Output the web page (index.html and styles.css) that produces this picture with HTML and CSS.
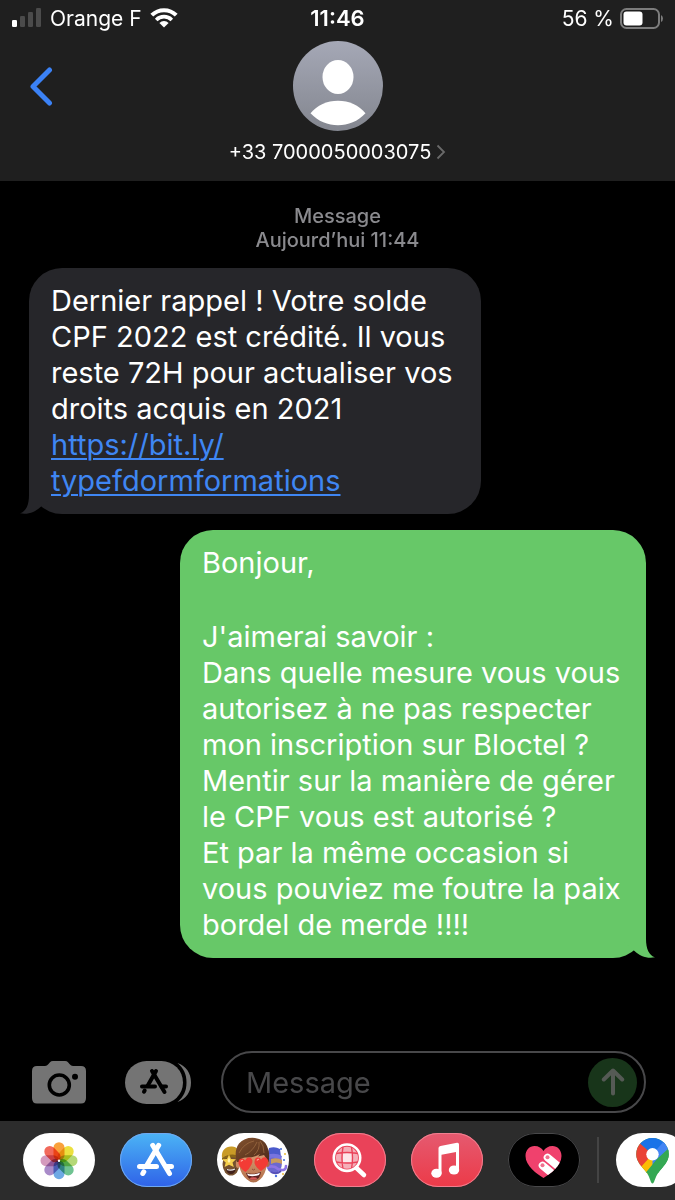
FILE: index.html
```html
<!DOCTYPE html>
<html lang="fr">

<head>
    <meta charset="UTF-8">
    <meta name="viewport" content="width=device-width, initial-scale=1.0">
    <title>Messages</title>
    <link rel="stylesheet" href="styles.css">
</head>

<body>
    <header class="header">
        <!-- Status bar -->
        <div class="status">
            <div class="status-left">
                <svg class="signal" width="30" height="20" viewBox="0 0 30 20">
                    <rect x="0" y="12" width="5" height="7" rx="1.3" fill="#fff" />
                    <rect x="8" y="8" width="5" height="11" rx="1.3" fill="#4b4b4b" />
                    <rect x="16" y="4" width="5" height="15" rx="1.3" fill="#4b4b4b" />
                    <rect x="24" y="0" width="5" height="19" rx="1.3" fill="#4b4b4b" />
                </svg>
                <span>Orange F</span>
                <svg class="wifi" width="28" height="20" viewBox="0 0 28 20" fill="none" stroke="#fff">
                    <path d="M1.8 7.2A17.3 17.3 0 0 1 26.2 7.2" stroke-width="4" />
                    <path d="M6.2 11.9A11 11 0 0 1 21.8 11.9" stroke-width="3.6" />
                    <path d="M14 19.5L9.4 14.9A6.6 6.6 0 0 1 18.6 14.9Z" fill="#fff" stroke="none" />
                </svg>
            </div>
            <time class="clock">11:46</time>
            <div class="status-right">
                <span>56 %</span>
                <svg width="43" height="21" viewBox="0 0 43 21">
                    <rect x="1" y="1" width="38" height="19" rx="5.5" fill="none" stroke="#7c7c7c" stroke-width="2" />
                    <rect x="3.5" y="3.5" width="19" height="14" rx="3" fill="#fff" />
                    <path d="M41 7Q43 8 43 10.5T41 14Z" fill="#7c7c7c" />
                </svg>
            </div>
        </div>

        <!-- Contact -->
        <div class="contact">
            <button class="back" type="button" aria-label="Retour">
                <svg width="24" height="40" viewBox="0 0 24 40" fill="none" stroke="#3b82f6" stroke-width="5"
                    stroke-linecap="round" stroke-linejoin="round">
                    <path d="M20.5 4L4 20.5L20.5 37" />
                </svg>
            </button>
            <button class="person" type="button">
                <svg width="90" height="90" viewBox="-45 -45 90 90">
                    <defs>
                        <linearGradient id="avatar" x1="0" y1="0" x2="0" y2="1">
                            <stop offset="0" stop-color="#a5a8b6" />
                            <stop offset="1" stop-color="#83868f" />
                        </linearGradient>
                    </defs>
                    <circle r="45" fill="url(#avatar)" />
                    <ellipse cy="-9" rx="15.5" ry="17" fill="#fff" />
                    <path d="M-27.5 27.3C-21 19 -11 14.7 0 14.7S21 19 27.5 27.3C20 35.5 10 39.3 0 39.3S-20 35.5 -27.5 27.3Z"
                        fill="#fff" />
                </svg>
                <span class="number">+33 7000050003075
                    <svg width="10" height="16" viewBox="0 0 10 16" fill="none" stroke="#6a6a6a" stroke-width="1.8">
                        <path d="M1.5 1.5L8 8L1.5 14.5" />
                    </svg>
                </span>
            </button>
        </div>
    </header>

    <main class="thread">
        <p class="stamp">Message<br><time>Aujourd’hui 11:44</time></p>

        <div class="bubble received">
            <p>Dernier rappel ! Votre solde CPF 2022 est crédité. Il vous reste 72H pour actualiser vos droits acquis en 2021<br><a
                    href="https://bit.ly/typefdormformations">https://bit.ly/<br>typefdormformations</a></p>
            <svg class="tail" width="32" height="36" viewBox="0 0 32 36">
                <path d="M9 0V17C9 27 6 33.5 0 35.3C8 37 15 34 20.5 29L31 20V0Z" />
            </svg>
        </div>

        <div class="bubble sent">
            <p>Bonjour,</p>
            <p>J'aimerai savoir :<br>Dans quelle mesure vous vous autorisez à ne pas respecter mon inscription sur Bloctel ?<br>Mentir
                sur la manière de gérer le CPF vous est autorisé ?<br>Et par la même occasion si<br>vous pouviez me foutre la paix bordel
                de merde !!!!</p>
            <svg class="tail" width="32" height="36" viewBox="0 0 32 36">
                <path d="M9 0V17C9 27 6 33.5 0 35.3C8 37 15 34 20.5 29L31 20V0Z" />
            </svg>
        </div>
    </main>

    <!-- Message field -->
    <form class="composer">
        <button class="tool" type="button" aria-label="Appareil photo">
            <svg width="54" height="43" viewBox="0 0 54 43">
                <path d="M5 5H13Q15 5 16.5 3L18 1.2Q19 0 21 0H33Q35 0 36 1.2L37.5 3Q39 5 41 5H49Q54 5 54 10V37Q54 42.5 49 42.5H5Q0 42.5 0 37V10Q0 5 5 5Z"
                    fill="#747474" />
                <circle cx="27.3" cy="24" r="10" fill="none" stroke="#000" stroke-width="3.6" />
                <circle cx="43" cy="15.7" r="3" fill="#000" />
            </svg>
        </button>
        <button class="tool" type="button" aria-label="Apps">
            <svg width="66" height="43" viewBox="0 0 66 43">
                <rect width="58" height="43" rx="21.5" fill="#747474" />
                <path d="M52.5 2C61 5 66 12 66 21.5S61 38 52.5 41C58.5 36 61.5 30 61.5 21.5S58.5 7 52.5 2Z" fill="#747474" />
                <g fill="none" stroke="#000" stroke-width="4" stroke-linecap="round">
                    <path d="M27 10L39.5 31" />
                    <path d="M31 10L22.5 25" />
                    <path d="M19.7 29.5L19 30.7" />
                    <path d="M17 25.5H30M36.5 25.5H41" />
                </g>
            </svg>
        </button>
        <div class="field">
            <input type="text" placeholder="Message" aria-label="Message">
            <button class="send" type="submit" aria-label="Envoyer">
                <svg width="24" height="28" viewBox="0 0 24 28" fill="none" stroke="#555a55" stroke-width="4"
                    stroke-linecap="round" stroke-linejoin="round">
                    <path d="M12 25.5V2.5M2.8 11.5L12 2.5L21.2 11.5" />
                </svg>
            </button>
        </div>
    </form>

    <!-- App drawer -->
    <nav class="drawer">
        <button class="app white" type="button" aria-label="Photos">
            <svg width="72" height="54" viewBox="0 0 72 54">
                <g class="petals" transform="translate(36 27.7)">
                    <rect x="-5.5" y="-18.5" width="11" height="18.5" rx="5.5" fill="#f9a13c" />
                    <rect x="-5.5" y="-18.5" width="11" height="18.5" rx="5.5" fill="#ece03f" transform="rotate(45)" />
                    <rect x="-5.5" y="-18.5" width="11" height="18.5" rx="5.5" fill="#b4d877" transform="rotate(90)" />
                    <rect x="-5.5" y="-18.5" width="11" height="18.5" rx="5.5" fill="#6fc391" transform="rotate(135)" />
                    <rect x="-5.5" y="-18.5" width="11" height="18.5" rx="5.5" fill="#6ea9e4" transform="rotate(180)" />
                    <rect x="-5.5" y="-18.5" width="11" height="18.5" rx="5.5" fill="#a98bc9" transform="rotate(225)" />
                    <rect x="-5.5" y="-18.5" width="11" height="18.5" rx="5.5" fill="#d49abd" transform="rotate(270)" />
                    <rect x="-5.5" y="-18.5" width="11" height="18.5" rx="5.5" fill="#f1695b" transform="rotate(315)" />
                </g>
                <circle cx="36" cy="27.7" r="1.2" fill="#fff" />
            </svg>
        </button>
        <button class="app store" type="button" aria-label="App Store">
            <svg width="72" height="54" viewBox="0 0 72 54" fill="none" stroke="#fff" stroke-width="5"
                stroke-linecap="round">
                <path d="M32.7 12.3L49.5 40.5" />
                <path d="M38.7 12.3L27 32" />
                <path d="M23.8 38.8L22.8 40.5" />
                <path d="M19.5 33.5H36.5M46 33.5H51.5" />
            </svg>
        </button>
        <button class="app white" type="button" aria-label="Memoji">
            <svg width="72" height="54" viewBox="0 0 72 54">
                <defs>
                    <linearGradient id="skin" x1="0" y1="0" x2="0" y2="1">
                        <stop offset="0" stop-color="#d99a72" />
                        <stop offset="1" stop-color="#b06f4a" />
                    </linearGradient>
                    <linearGradient id="hair" x1="0" y1="0" x2="1" y2="1">
                        <stop offset="0" stop-color="#84532f" />
                        <stop offset="1" stop-color="#4b2818" />
                    </linearGradient>
                </defs>
                <!-- left face -->
                <ellipse cx="14" cy="31" rx="8.5" ry="11.5" fill="#74502f" />
                <path d="M5 25C4 17 9 13 15 13.5C20 14 23 17 23 24Q13 20 5 25Z" fill="#c99b27" />
                <path d="M5 25Q13 19 23 23V26Q13 22 5 27Z" fill="#8a6617" />
                <path d="M12 21.5L14 26L19 26.3L15.5 29.5L16.8 34L12 31.7L7.6 34L8.7 29.5L5 26.3L10 26Z" fill="#f5cf4d" />
                <path d="M12 24L13.5 28L12 30L10.5 28Z" fill="#fff3ae" />
                <path d="M9 36Q14 38 19 35Q18 41 14 41Q10 41 9 36Z" fill="#40201a" />
                <path d="M10 36.5Q14 38 18 36" stroke="#eee" stroke-width="1.2" fill="none" />
                <!-- right face -->
                <ellipse cx="57" cy="30" rx="8" ry="10.5" fill="#6b67cf" />
                <path d="M51 21L52 15Q58 13 63 16L64 24L51 25Z" fill="#4b5acb" />
                <path d="M50 22Q58 19 65 23L64 27Q57 23 50 26Z" fill="#7774df" />
                <path d="M54 26Q60 24 65 27V31Q59 28 54 31Z" fill="#c99b5d" />
                <path d="M51 34Q57 32 61 36Q69 39 69 33" stroke="#8d74e5" stroke-width="2.6" fill="none" stroke-linecap="round" />
                <path d="M54 39Q59 42 64 38" stroke="#5650b8" stroke-width="2" fill="none" />
                <circle cx="64" cy="16" r="1" fill="#3e68d8" />
                <circle cx="68" cy="21" r="1" fill="#e9bb39" />
                <circle cx="67" cy="27" r="1" fill="#3e68d8" />
                <circle cx="59" cy="43" r="1.2" fill="#4b70e0" />
                <circle cx="66" cy="41" r="1" fill="#e9bb39" />
                <!-- middle face -->
                <ellipse cx="21" cy="31" rx="2.2" ry="4" fill="#cb8962" />
                <ellipse cx="50.5" cy="30" rx="2.2" ry="4" fill="#ad6d49" />
                <path d="M22 20H50V31Q48.500 42 43 46.500Q36.500 52.500 30 46.500Q24 42 22 32Z" fill="url(#skin)" />
                <path d="M20 29Q16.500 18 22 10.500Q28 4 38 5Q47 6 50 13Q53.500 20 51.500 29L49.500 28Q49 24 47 22L41 23.500L43 21Q37 25 28 24.500Q23.500 25 22.500 29Z"
                    fill="url(#hair)" />
                <path d="M22 20Q27 10 37 8M28 22Q36 18 40 9M37 22Q43 17 42 9M47 20Q47 12 43 8" stroke="#a27046"
                    stroke-width="1" fill="none" opacity="0.7" />
                <path d="M28.5 39Q23 35.500 21.5 30.5Q21 26 24.5 25.500Q27 25.500 28.2 27.5Q29.5 24 33 24.5Q37 26.500 34.5 31.5Q32.5 36 28.5 39Z"
                    fill="#f33b35" />
                <path d="M44 38Q39 34.500 37.6 30.5Q37 25.500 40 24.5Q43 24 44 26.5Q46 23.500 49 24.5Q53 27.500 50 32.5Q48 35.500 44 38Z"
                    fill="#f33b35" />
                <path d="M24 28.5Q24.5 27 26 27.5M40 27.5Q40.5 26 42 26.5" stroke="#ff9d90" stroke-width="1.3" fill="none" />
                <path d="M35 36Q36.5 38 38 36" stroke="#8f5338" stroke-width="1" fill="none" />
                <path d="M29 40Q36 42 44 39Q43 47 36.5 47Q31 47 29 40Z" fill="#5e211f" />
                <path d="M30 40.5Q36 42.5 43 39.8L42 42Q36 44 31 42.5Z" fill="#fff" />
                <ellipse cx="36.5" cy="45.5" rx="3.5" ry="1.3" fill="#d85b5a" />
            </svg>
        </button>
        <button class="app pink" type="button" aria-label="Images">
            <svg width="72" height="54" viewBox="0 0 72 54">
                <circle cx="33" cy="24.7" r="11" fill="#f5aeb8" />
                <path d="M28.5 20H38V29.5H28.5Z" fill="#fde6e9" />
                <path d="M29 14Q27 25 29 36M37.5 14Q39.5 25 37.5 36M22 20.5Q33 18.5 44 20.5M22 29Q33 31 44 29"
                    fill="none" stroke="#ea4259" stroke-width="1.4" />
                <circle cx="33" cy="24.7" r="13.2" fill="none" stroke="#fff" stroke-width="2.6" />
                <path d="M42.5 35L50 42" stroke="#fff" stroke-width="4.5" stroke-linecap="round" />
            </svg>
        </button>
        <button class="app music" type="button" aria-label="Musique">
            <svg width="72" height="54" viewBox="0 0 72 54" fill="#fff">
                <path d="M27.5 15Q27.5 13.3 29.5 13L46 9.8Q48 9.5 48 11.5V36H45V19L30.5 21.8V40H27.5Z" />
                <ellipse cx="25.5" cy="40.2" rx="5.2" ry="4.5" />
                <ellipse cx="43" cy="37" rx="5.2" ry="4.5" />
            </svg>
        </button>
        <button class="app touch" type="button" aria-label="Digital Touch">
            <svg width="72" height="54" viewBox="0 0 72 54">
                <defs>
                    <clipPath id="heart">
                        <path d="M35.5 45C29 41 17.5 33 17.5 23C17.5 17 21.5 13 26.5 13C30.5 13 34 15 35.5 18C37 15 40.5 13 44.5 13C49.5 13 53.5 17 53.5 23C53.5 33 42 41 35.5 45Z" />
                    </clipPath>
                </defs>
                <path d="M35.5 45C29 41 17.5 33 17.5 23C17.5 17 21.5 13 26.5 13C30.5 13 34 15 35.5 18C37 15 40.5 13 44.5 13C49.5 13 53.5 17 53.5 23C53.5 33 42 41 35.5 45Z"
                    fill="#f0416d" />
                <g clip-path="url(#heart)">
                    <path d="M34.5 32.5L50 45.5M39.5 24.5L57 39" stroke="#fff" stroke-width="7.6" stroke-linecap="round" />
                    <circle cx="34.5" cy="32.3" r="2" fill="#f0718f" />
                    <circle cx="39.5" cy="24.3" r="2" fill="#f0718f" />
                </g>
            </svg>
        </button>
        <span class="divider"></span>
        <button class="app white" type="button" aria-label="Google Maps">
            <svg width="72" height="54" viewBox="0 0 72 54">
                <defs>
                    <clipPath id="pin">
                        <path d="M36.5 50.5C34.5 50.5 34.5 45 30.5 39.5C26 33.5 20.2 29 20.2 21.3A16.3 16.3 0 0 1 52.8 21.3C52.8 29 47 33.5 42.5 39.5C38.5 45 38.5 50.5 36.5 50.5Z" />
                    </clipPath>
                </defs>
                <g clip-path="url(#pin)">
                    <rect width="72" height="54" fill="#34a853" />
                    <path d="M18 35L36.5 21.3L43 26L27 46L18 40Z" fill="#fbbc04" />
                    <path d="M18 8L24 10L36.5 21.3L24 35H18Z" fill="#ea4335" />
                    <path d="M24 10.5L30 3H50L54 8L36.5 21.3Z" fill="#1a73e8" />
                    <path d="M36.5 21.3L49 7L55 16L36.5 34Z" fill="#4285f4" />
                    <path d="M41 26L54 14V40H30L27 43Z" fill="#34a853" />
                </g>
                <circle cx="36.5" cy="21.3" r="6.2" fill="#fff" />
            </svg>
        </button>
    </nav>
</body>

</html>
```
FILE: styles.css
```css
* {
    padding: 0;
    margin: 0;
    box-sizing: border-box;
}

body {
    min-height: 100vh;
    display: flex;
    flex-direction: column;
    overflow-x: hidden;
    background-color: #000;
    color: #fff;
    font-family: Inter, "Liberation Sans", sans-serif;
}

button {
    border: none;
    background: none;
    color: inherit;
    font: inherit;
    cursor: pointer;
}

svg {
    display: block;
    flex-shrink: 0;
}

/* Header */
.header {
    padding-bottom: 17px;
    background-color: #1f1f1f;
}

.status {
    display: grid;
    grid-template-columns: 1fr auto 1fr;
    align-items: center;
    height: 36px;
    padding: 0 12px;
    font-size: 21px;
}

.status-left,
.status-right {
    display: flex;
    align-items: center;
    gap: 8px;
}

.status-right {
    justify-content: flex-end;
    gap: 6px;
}

.clock {
    font-size: 22px;
    font-weight: 600;
}

.contact {
    display: grid;
    grid-template-columns: 1fr auto 1fr;
    align-items: start;
    padding: 5px 29px 0;
}

.back {
    justify-self: start;
    padding-top: 25px;
}

.person {
    display: flex;
    flex-direction: column;
    align-items: center;
    gap: 9px;
}

.number {
    display: flex;
    align-items: center;
    gap: 5px;
    font-size: 20px;
    line-height: 24px;
}

/* Conversation */
.thread {
    flex: 1;
    display: flex;
    flex-direction: column;
    padding: 23px 29px;
}

.stamp {
    margin-bottom: 16px;
    color: #8a8a8e;
    font-size: 20px;
    font-weight: 500;
    line-height: 24px;
    text-align: center;
}

.bubble {
    position: relative;
    max-width: 100%;
    padding: 15px 22px;
    border-radius: 33px;
    font-size: 29px;
    line-height: 36px;
}

.received {
    align-self: flex-start;
    width: 452px;
    margin-bottom: 16px;
    background-color: #26262a;
}

.received a {
    color: #3f86f3;
    text-underline-offset: 3px;
    text-decoration-thickness: 2px;
}

.sent {
    align-self: flex-end;
    width: 466px;
    background-color: #67c868;
}

.sent p + p {
    margin-top: 38px;
}

.tail {
    position: absolute;
    bottom: 0;
    left: -9px;
    fill: #26262a;
}

.sent .tail {
    left: auto;
    right: -9px;
    fill: #67c868;
    transform: scaleX(-1);
}

/* Message field */
.composer {
    display: flex;
    align-items: center;
    padding: 0 29px 8px 32px;
}

.tool {
    margin-right: 39px;
}

.tool + .tool {
    margin-right: 30px;
}

.field {
    flex: 1;
    display: flex;
    align-items: center;
    min-width: 0;
    height: 62px;
    padding: 0 7px 0 23px;
    border: 2px solid #48484a;
    border-radius: 31px;
}

.field input {
    flex: 1;
    min-width: 0;
    border: none;
    outline: none;
    background: none;
    color: #fff;
    font-family: inherit;
    font-size: 29px;
}

.field input::placeholder {
    color: #48484a;
    opacity: 1;
}

.send {
    display: flex;
    justify-content: center;
    align-items: center;
    width: 49px;
    height: 49px;
    border-radius: 50%;
    background-color: #18351a;
}

/* App drawer */
.drawer {
    display: flex;
    gap: 25px;
    padding: 12px 0 13px 23px;
    overflow: hidden;
    background-color: #2c2c2c;
}

.app {
    flex-shrink: 0;
    width: 72px;
    height: 54px;
    border-radius: 27px;
    overflow: hidden;
}

.white {
    background-color: #fff;
}

.petals rect {
    mix-blend-mode: multiply;
}

.store {
    background: linear-gradient(#4bb4f5, #2f62e8);
    box-shadow: inset 0 0 0 1px #6fa9f0;
}

.pink {
    background-color: #ea4259;
    box-shadow: inset 0 0 0 1px #f07f8f;
}

.music {
    background: linear-gradient(#e55a70, #ec3a48);
    box-shadow: inset 0 0 0 1px #f07f8f;
}

.touch {
    background-color: #000;
    box-shadow: inset 0 0 0 1px #48484a;
}

.divider {
    flex-shrink: 0;
    width: 2px;
    height: 46px;
    margin: 4px -8px;
    background-color: #444;
}
```
